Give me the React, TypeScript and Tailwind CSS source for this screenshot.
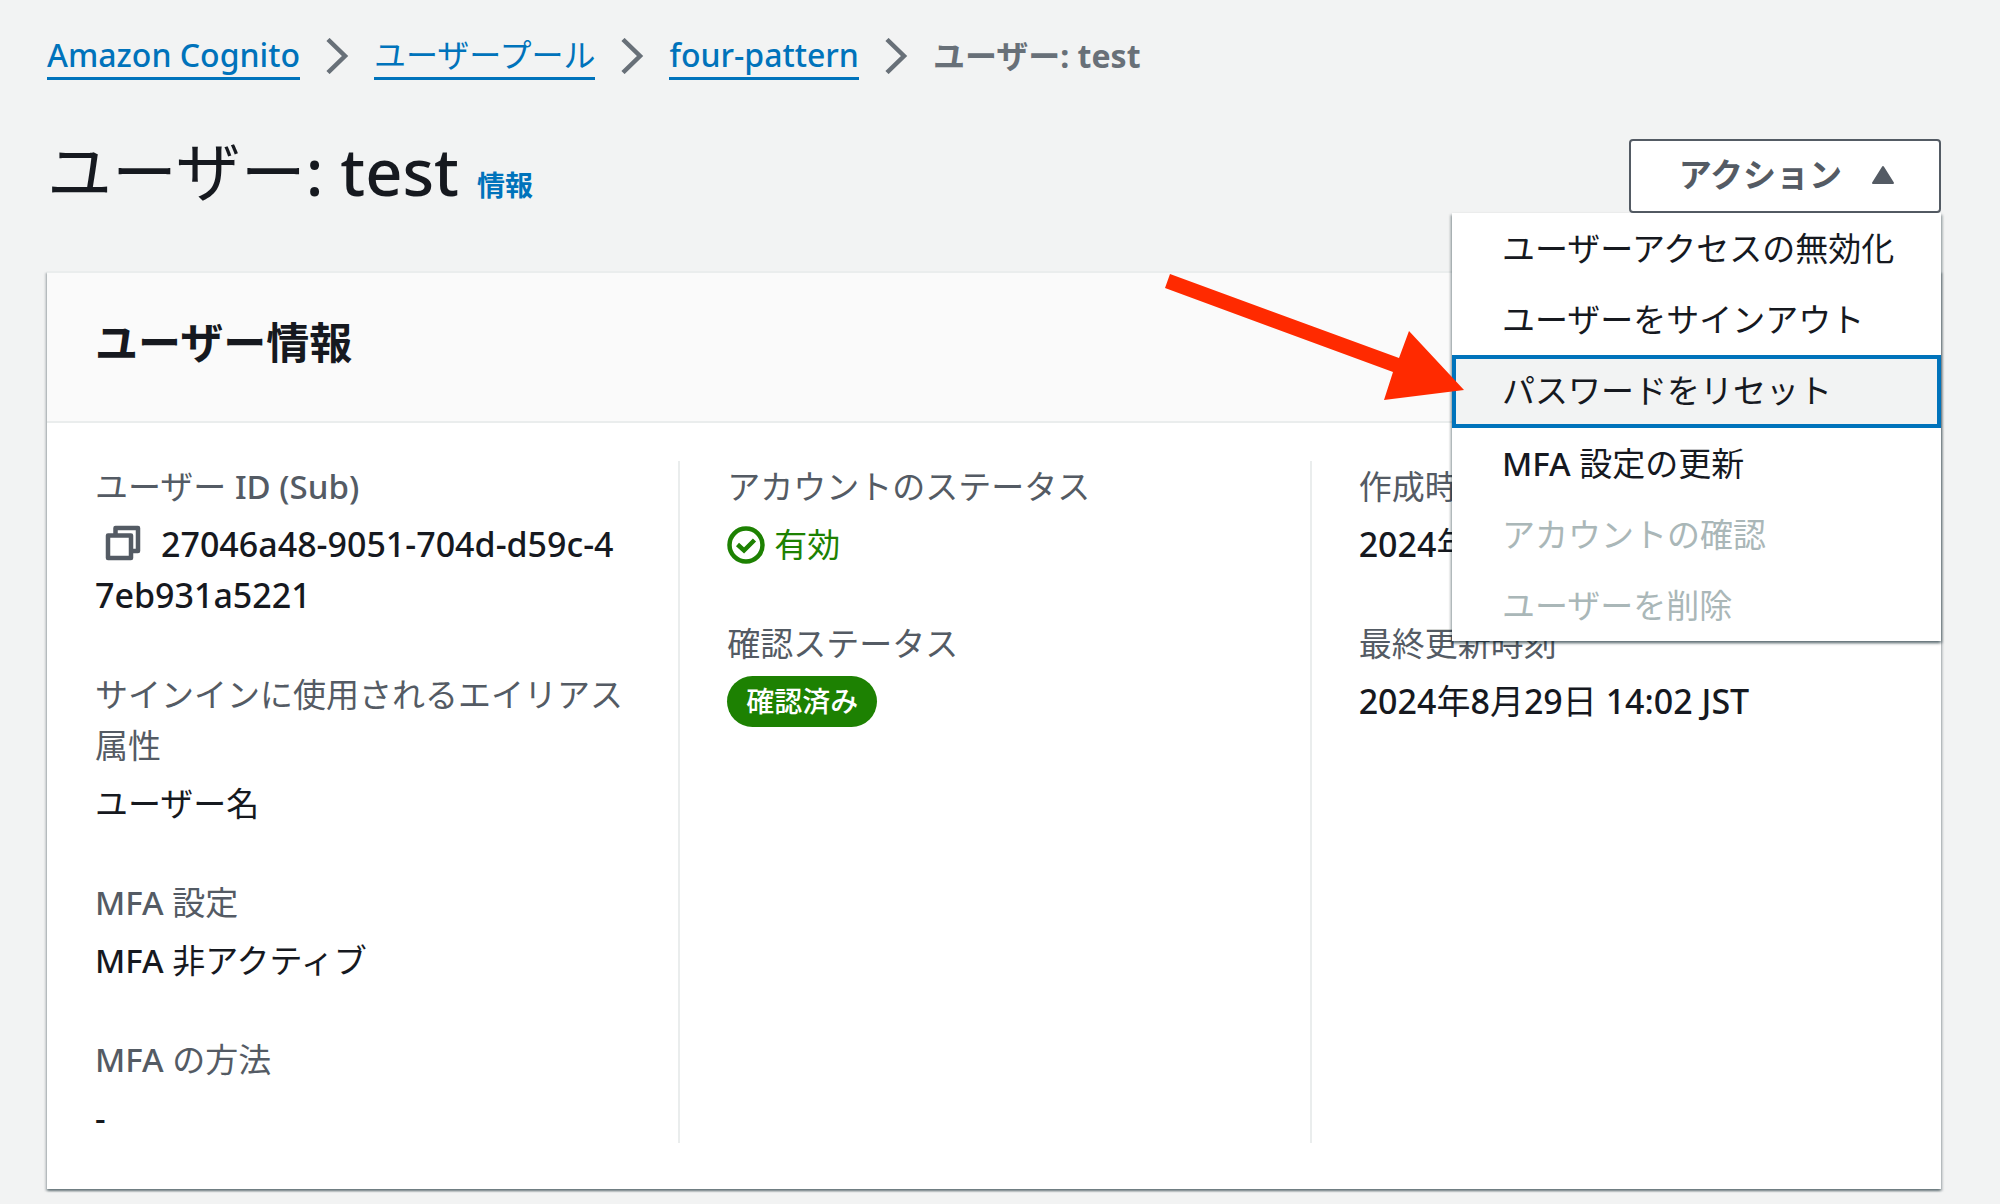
import { Fragment, type ReactNode } from "react";

const crumbs = ["Amazon Cognito", "ユーザープール", "four-pattern"];

type Action = { label: string; state?: "selected" | "disabled" };

const actions: Action[] = [
  { label: "ユーザーアクセスの無効化" },
  { label: "ユーザーをサインアウト" },
  { label: "パスワードをリセット", state: "selected" },
  { label: "MFA 設定の更新" },
  { label: "アカウントの確認", state: "disabled" },
  { label: "ユーザーを削除", state: "disabled" },
];

/** Sets the Latin runs of a mixed string one weight heavier than the Japanese ones. */
function Mixed({ text }: { text: string }) {
  return text.split(/([\x21-\x7e]+(?: [\x21-\x7e]+)*)/).map((part, i) =>
    i % 2 ? (
      <span key={i} className="font-medium">
        {part}
      </span>
    ) : (
      part
    ),
  );
}

function ChevronIcon() {
  return (
    <svg className="h-9 w-6 shrink-0" viewBox="0 0 24 36" fill="none" stroke="#687078" strokeWidth="4.500" aria-hidden="true">
      <path d="M3 1.500 L20 18 L3 34.500" />
    </svg>
  );
}

function CopyIcon() {
  return (
    <svg className="size-9" viewBox="0 0 36 36" fill="none" stroke="#545b64" strokeWidth="4.500" strokeLinejoin="round" aria-hidden="true">
      <path d="M3 10.500 H26 V33 H3 Z" />
      <path d="M10.500 10 V3 H33 V26 H27" />
    </svg>
  );
}

function CheckCircleIcon() {
  return (
    <svg className="size-[38px] shrink-0" viewBox="0 0 38 38" fill="none" stroke="currentColor" aria-hidden="true">
      <circle cx="19" cy="19" r="16.500" strokeWidth="4.500" />
      <path d="M10.500 18.500 L17 24.500 L27.500 14" strokeWidth="4.500" />
    </svg>
  );
}

function Field({ label, children }: { label: string; children: ReactNode }) {
  return (
    <div className="flex flex-col gap-[7px]">
      <dt className="text-[#545b64]">
        <Mixed text={label} />
      </dt>
      <dd className="break-all">{children}</dd>
    </div>
  );
}

function PointerArrow() {
  return (
    <svg
      className="pointer-events-none absolute right-full -top-[81px] -mr-3 h-[126px] w-[299px]"
      viewBox="0 0 299 126"
      fill="#ff2a00"
      aria-hidden="true"
    >
      <path d="M5 0 L234 84 L244 57 L299 116 L219 126 L228 98 L0 14 Z" />
    </svg>
  );
}

function ActionsMenu() {
  return (
    <ul
      role="menu"
      aria-label="アクション"
      className="absolute top-full right-0 z-10 w-[489px] bg-white shadow-[0_2px_3px_0_rgba(0,28,36,0.5),2px_2px_2px_0_rgba(0,28,36,0.15),-2px_2px_2px_0_rgba(0,28,36,0.15)]"
    >
      {actions.map(({ label, state }) => (
        <li key={label} role="none" className="relative">
          <button
            type="button"
            role="menuitem"
            disabled={state === "disabled"}
            className={
              state === "selected"
                ? "block w-full border-4 border-[#0073bb] bg-[#f2f3f3] pt-[6px] pb-2 pl-[46px] text-left whitespace-nowrap text-[#16191f]"
                : "block w-full py-[10px] pl-[50px] text-left whitespace-nowrap text-[#16191f] disabled:text-[#aab7b8]"
            }
          >
            <Mixed text={label} />
          </button>
          {state === "selected" && <PointerArrow />}
        </li>
      ))}
    </ul>
  );
}

export default function App() {
  return (
    <main
      lang="ja"
      className="min-h-screen bg-[#f2f3f3] pr-[59px] pb-[15px] pl-[47px] font-['Noto_Sans','Noto_Sans_CJK_JP',sans-serif] text-[33px] leading-[51px] text-[#16191f]"
    >
      <nav aria-label="パンくずリスト" className="pt-[31px] text-[32px] leading-[46px]">
        <ol className="flex items-center gap-[25px]">
          {crumbs.map((name) => (
            <Fragment key={name}>
              <li>
                <a href="#" className="block border-b-3 border-[#0073bb] pt-[2px] leading-[44px] text-[#0073bb]">
                  <Mixed text={name} />
                </a>
              </li>
              <li>
                <ChevronIcon />
              </li>
            </Fragment>
          ))}
          <li aria-current="page" className="font-bold text-[#687078]">
            ユーザー: test
          </li>
        </ol>
      </nav>

      <header className="mt-[59px] flex items-start justify-between">
        <div className="flex items-baseline gap-[18px]">
          <h1 className="text-[65px] leading-[64px]">
            <Mixed text="ユーザー: test" />
          </h1>
          <a href="#" className="text-[28px] leading-[32px] font-bold text-[#0073bb]">
            情報
          </a>
        </div>
        <div className="relative">
          <button
            type="button"
            aria-haspopup="menu"
            aria-expanded="true"
            className="flex items-center gap-[29px] rounded-[4px] border-2 border-[#545b64] bg-white pt-2 pb-[11px] pr-11 pl-12 font-bold text-[#545b64]"
          >
            アクション
            <svg className="h-5 w-6" viewBox="0 0 24 20" fill="currentColor" stroke="currentColor" strokeWidth="2" strokeLinejoin="round" aria-hidden="true">
              <path d="M12 2 L22 18 H2 Z" />
            </svg>
          </button>
          <ActionsMenu />
        </div>
      </header>

      <section
        aria-labelledby="user-info"
        className="mt-[58px] border-t-2 border-[#eaeded] bg-white shadow-[0_2px_2px_0_rgba(0,28,36,0.4),2px_2px_2px_0_rgba(0,28,36,0.15),-2px_2px_2px_0_rgba(0,28,36,0.15)]"
      >
        <div className="border-b-2 border-[#eaeded] bg-[#fafafa] px-12 pt-[42px] pb-[50px]">
          <h2 id="user-info" className="text-[43px] leading-[56px] font-bold">
            ユーザー情報
          </h2>
        </div>
        <dl className="grid grid-cols-3 pt-[38px] pb-[46px]">
          <div className="flex flex-col gap-12 pr-[52px] pl-12">
            <Field label="ユーザー ID (Sub)">
              <button type="button" aria-label="コピー" className="mr-5 ml-[10px] inline-flex align-[-4px]">
                <CopyIcon />
              </button>
              <span className="text-[34px] font-medium">27046a48-9051-704d-d59c-47eb931a5221</span>
            </Field>
            <Field label="サインインに使用されるエイリアス属性">ユーザー名</Field>
            <Field label="MFA 設定">
              <Mixed text="MFA 非アクティブ" />
            </Field>
            <Field label="MFA の方法">
              <Mixed text="-" />
            </Field>
          </div>
          <div className="flex flex-col gap-12 border-l-2 border-[#eaeded] pr-[52px] pl-[47px]">
            <Field label="アカウントのステータス">
              <span className="flex items-center gap-[9px] text-[#1d8102]">
                <CheckCircleIcon />
                有効
              </span>
            </Field>
            <Field label="確認ステータス">
              <span className="inline-block rounded-full bg-[#1d8102] px-[19px] align-top text-[28px] font-medium text-white">
                確認済み
              </span>
            </Field>
          </div>
          <div className="flex flex-col gap-12 border-l-2 border-[#eaeded] pr-[52px] pl-[47px]">
            <Field label="作成時刻">
              <span className="block text-[34px]">
                <Mixed text="2024年8月29日 14:02 JST" />
              </span>
            </Field>
            <Field label="最終更新時刻">
              <span className="block text-[34px]">
                <Mixed text="2024年8月29日 14:02 JST" />
              </span>
            </Field>
          </div>
        </dl>
      </section>
    </main>
  );
}
